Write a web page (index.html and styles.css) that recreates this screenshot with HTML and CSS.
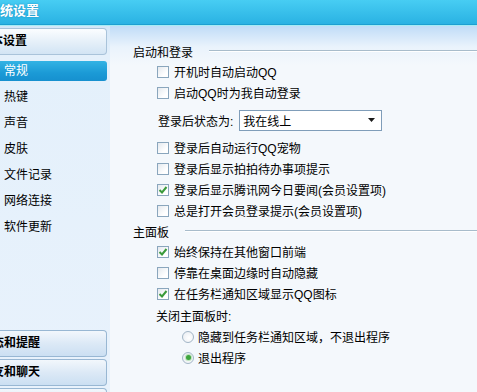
FILE: index.html
```html
<!DOCTYPE html>
<html lang="zh-CN">
<head>
  <meta charset="UTF-8">
  <title>系统设置</title>
<link rel="stylesheet" href="styles.css">
</head>
<body>
  <div class="window">
    <div class="titlebar"><span class="title">系统设置</span></div>
    <div class="main">
      <div class="sidebar">
        <div class="group-btn">基本设置</div>
        <ul class="nav">
          <li class="nav-item active">常规</li>
          <li class="nav-item">热键</li>
          <li class="nav-item">声音</li>
          <li class="nav-item">皮肤</li>
          <li class="nav-item">文件记录</li>
          <li class="nav-item">网络连接</li>
          <li class="nav-item">软件更新</li>
        </ul>
        <div class="bottom-groups">
          <div class="group-btn">状态和提醒</div>
          <div class="group-btn">好友和聊天</div>
          <div class="group-btn">安全和隐私</div>
        </div>
      </div>

      <div class="content">
        <div class="section-title"><span>启动和登录</span><i class="rule"></i></div>
        <label class="row"><span class="box"></span>开机时自动启动QQ</label>
        <label class="row"><span class="box"></span>启动QQ时为我自动登录</label>
        <div class="row status-row">
          <span class="plain">登录后状态为:</span>
          <div class="select">
            <span>我在线上</span>
            <svg class="arrow" width="7" height="4" viewBox="0 0 7 4"><path d="M0 0 H7 L3.5 4 Z" fill="#1a1a1a"/></svg>
          </div>
        </div>
        <div class="after-status">
          <label class="row"><span class="box"></span>登录后自动运行QQ宠物</label>
          <label class="row"><span class="box"></span>登录后显示拍拍待办事项提示</label>
          <label class="row"><span class="box checked"><svg width="10" height="10" viewBox="0 0 10 10"><path d="M1.5 5 L4 7.5 L8.5 2" fill="none" stroke="#3a9a3a" stroke-width="2"/></svg></span>登录后显示腾讯网今日要闻(会员设置项)</label>
          <label class="row"><span class="box"></span>总是打开会员登录提示(会员设置项)</label>
        </div>

        <div class="section-title"><span>主面板</span><i class="rule"></i></div>
        <label class="row"><span class="box checked"><svg width="10" height="10" viewBox="0 0 10 10"><path d="M1.5 5 L4 7.5 L8.5 2" fill="none" stroke="#3a9a3a" stroke-width="2"/></svg></span>始终保持在其他窗口前端</label>
        <label class="row"><span class="box"></span>停靠在桌面边缘时自动隐藏</label>
        <label class="row"><span class="box checked"><svg width="10" height="10" viewBox="0 0 10 10"><path d="M1.5 5 L4 7.5 L8.5 2" fill="none" stroke="#3a9a3a" stroke-width="2"/></svg></span>在任务栏通知区域显示QQ图标</label>
        <div class="row close-label"><span class="plain">关闭主面板时:</span></div>
        <label class="row radio-row"><span class="radio"></span>隐藏到任务栏通知区域，不退出程序</label>
        <label class="row radio-row"><span class="radio on"></span>退出程序</label>
      </div>
    </div>
  </div>
</body>
</html>
```

FILE: styles.css
```css
* {
  margin: 0;
  padding: 0;
  box-sizing: border-box;
}
body {
  font-family: "Liberation Sans", "Noto Sans CJK SC", sans-serif;
  font-size: 12px;
  color: #000;
  background: #f4f8fc;
  overflow: hidden;
}
.window {
  width: 477px;
  height: 392px;
  overflow: hidden;
}
.titlebar {
  height: 25px;
  background: linear-gradient(#47cdf3, #2ab2e3);
  border-bottom: 1px solid #1d9fd2;
  box-shadow: 0 1px 0 #a6ecf4;
  position: relative;
  z-index: 1;
}
.title {
  display: block;
  margin-left: -13px;
  padding-top: 3px;
  color: #fff;
  font-size: 13px;
  font-weight: bold;
  line-height: 16px;
  text-shadow: 0 0 2px #1783b8;
}
.main {
  display: flex;
  height: 367px;
  background: linear-gradient(#bedbf7 0, #eaf3fc 22px, #f4f8fc 40px);
}

/* left column */
.sidebar {
  width: 110px;
  background: linear-gradient(#d3e6f8 0, #e4f0fb 30px, #e8f2fc 100%);
  padding-top: 3px;
  display: flex;
  flex-direction: column;
}
.sidebar > * {
  flex: none;
}
.group-btn {
  flex: none;
  width: 107px;
  height: 27px;
  border: 1px solid #a9c3da;
  border-left: none;
  border-radius: 0 4px 4px 0;
  background: linear-gradient(#fbfdff, #e6f0f9 50%, #d2e4f4);
  font-weight: bold;
  font-size: 12px;
  line-height: 25px;
  text-indent: -21px;
  white-space: nowrap;
  overflow: hidden;
}
.nav {
  list-style: none;
  margin-top: 6px;
}
.nav-item {
  width: 107px;
  height: 20px;
  line-height: 20px;
  margin-bottom: 6px;
  padding-left: 4px;
  white-space: nowrap;
}
.nav-item.active {
  background: linear-gradient(#33b3e4, #1b9ad6 60%, #1690cf);
  border-radius: 0 3px 3px 0;
  color: #fff;
}
.bottom-groups {
  margin-top: 87px;
  display: flex;
  flex-direction: column;
  gap: 2px;
}
.bottom-groups .group-btn {
  text-indent: -20px;
  background: linear-gradient(#f2f7fc, #dce9f6 50%, #cbdff2);
  border-color: #98b7d3;
}

/* right column */
.content {
  flex: 1;
  padding: 16px 0 0 23px;
}
.section-title {
  display: flex;
  align-items: center;
  height: 20px;
}
.section-title span {
  white-space: nowrap;
}
.rule {
  flex: 1;
  margin-left: 16px;
  border-top: 1px solid #a8bccb;
  border-bottom: 1px solid #fff;
  margin-top: -1px;
}
.row {
  display: flex;
  align-items: center;
  height: 21px;
  padding-left: 24px;
  white-space: nowrap;
}
.box {
  width: 12px;
  height: 12px;
  border: 1px solid #8aa6bd;
  background: linear-gradient(135deg, #e4e9ee, #fff 70%);
  margin-right: 5px;
  display: flex;
  align-items: center;
  justify-content: center;
  flex: none;
}
.status-row {
  height: 22px;
  margin-top: 6px;
  padding-left: 25px;
}
.plain {
  margin-right: 6px;
}
.select {
  width: 143px;
  height: 21px;
  border: 1px solid #7f9db9;
  background: #fff;
  display: flex;
  align-items: center;
  justify-content: space-between;
  padding: 0 6px 0 3px;
}
.after-status {
  margin-top: 6px;
}
.close-label {
  height: 22px;
  padding-left: 23px;
}
.radio-row {
  padding-left: 49px;
}
.radio {
  width: 12px;
  height: 12px;
  border-radius: 50%;
  border: 1px solid #a2b5c6;
  background: radial-gradient(circle at 60% 60%, #fff, #e6ebf0);
  margin-right: 4px;
  display: flex;
  align-items: center;
  justify-content: center;
  flex: none;
}
.radio.on::after {
  content: "";
  width: 5px;
  height: 5px;
  border-radius: 50%;
  background: #3da53d;
  box-shadow: 0 0 1px 1px #b6dfb6;
}
```
